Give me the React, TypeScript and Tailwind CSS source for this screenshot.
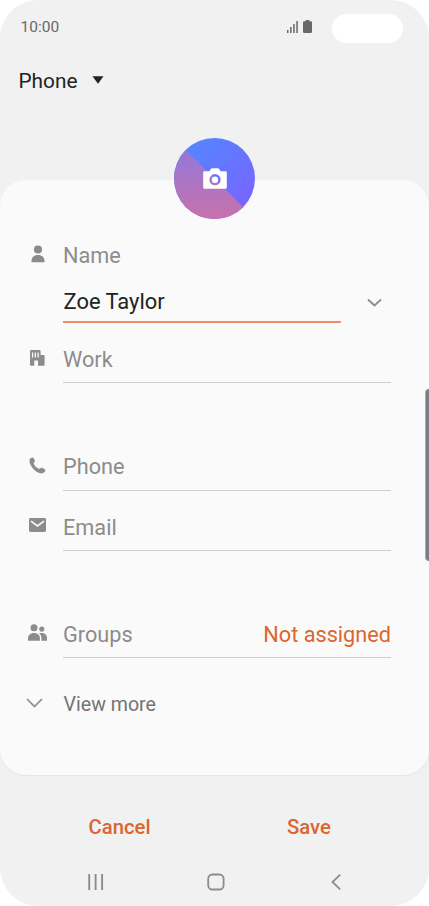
import type { ReactNode } from "react";

type FieldRowProps = {
  icon: ReactNode;
  label: string;
  value?: string;
  className?: string;
  labelClassName?: string;
};

const PersonIcon = () => (
  <svg width="14" height="18" viewBox="0 0 14 18" fill="currentColor">
    <circle cx="7" cy="4.500" r="4.100" />
    <path d="M.5 17.300v-1.600C.5 12.100 3.100 9.900 7 9.900s6.500 2.200 6.500 5.800v1.600z" />
  </svg>
);

const BuildingIcon = () => (
  <svg width="16" height="17" viewBox="0 0 16 17" fill="currentColor">
    <path
      fillRule="evenodd"
      d="M2.300.900h8A1.300 1.300 0 0 1 11.600 2.200V6.100h2.700A1.300 1.300 0 0 1 15.600 7.400v8a1.300 1.300 0 0 1-1.300 1.300H9v-5.200H5.200v5.200H2.300A1.300 1.300 0 0 1 1 15.400V2.200A1.300 1.300 0 0 1 2.300.900zM2.900 3.600v5h1.300v-5zm2.800 0v5h1.300v-5zm2.800 0v5h1.300v-5z"
    />
  </svg>
);

const PhoneIcon = () => (
  <svg width="17" height="17" viewBox="0 0 17 17" fill="currentColor">
    <path d="M.5 3.200C.6 1.700 2.500.2 3.700.5c.7.200 2.300 2.700 2.200 3.600 0 .9-1.400 1.500-1.200 2.300.5 2 3.200 4.700 5.400 5.400.9.200 1.500-1.100 2.400-1.100 1 0 4 1.700 4 2.500 0 1.200-2.100 3.200-3.900 3.200C7.300 16.400.2 9 .5 3.200z" />
  </svg>
);

const MailIcon = () => (
  <svg width="17" height="14" viewBox="0 0 17 14">
    <rect width="17" height="14" rx="1.400" fill="currentColor" />
    <path
      d="M2 3.100l6.500 4.900L15 3.100"
      fill="none"
      stroke="#fafafa"
      strokeWidth="1.600"
    />
  </svg>
);

const GroupsIcon = () => (
  <svg width="20" height="17" viewBox="0 0 20 17" fill="currentColor">
    <circle cx="7" cy="3.700" r="3.500" />
    <circle cx="14.800" cy="5.100" r="2.600" />
    <path d="M1 16.700v-2.500c0-3 2.500-5.100 6-5.100s5.900 2.100 5.900 5.100v2.500z" />
    <path d="M12.100 9.300c4.400-1 7.900 1 7.900 4.700v2.700h-5.600v-2.600c0-2-.8-3.600-2.300-4.800z" />
  </svg>
);

const CameraIcon = () => (
  <svg width="24" height="21" viewBox="0 0 24 21">
    <path
      fill="#fff"
      fillRule="evenodd"
      d="M1.300 3.200h5.200l1.300-2.100Q8.200.3 9.200.3h5.600q1 0 1.400.8l1.300 2.100h5.200q1.100 0 1.100 1.200v15.200q0 1.200-1.200 1.200H1.400q-1.200 0-1.200-1.200V4.400q0-1.200 1.100-1.200zM12 6.100a5.600 5.600 0 1 0 0 11.200 5.600 5.600 0 0 0 0-11.200zM12 8.500a3.200 3.200 0 1 1 0 6.400 3.200 3.200 0 0 1 0-6.400z"
    />
  </svg>
);

const Avatar = () => (
  <button
    aria-label="Add photo"
    className="-mt-[42px] mb-px grid size-[81px] place-items-center self-center overflow-hidden rounded-full"
  >
    <svg
      className="col-start-1 row-start-1"
      width="81"
      height="81"
      viewBox="0 0 82 82"
    >
      <defs>
        <linearGradient id="sky" x1=".2" y1="0" x2=".9" y2=".8">
          <stop offset="0" stopColor="#5286ff" />
          <stop offset="1" stopColor="#7766ff" />
        </linearGradient>
        <linearGradient id="dusk" x1="0" y1="0" x2="0" y2="1">
          <stop offset="0" stopColor="#887ae0" />
          <stop offset="1" stopColor="#c971ac" />
        </linearGradient>
      </defs>
      <rect width="82" height="82" fill="url(#sky)" />
      <path d="M0 0L82 82H0z" fill="url(#dusk)" />
    </svg>
    <span className="col-start-1 row-start-1 pb-px">
      <CameraIcon />
    </span>
  </button>
);

const FieldRow = ({
  icon,
  label,
  value,
  className = "",
  labelClassName = "",
}: FieldRowProps) => (
  <div className={`flex h-12 text-[21.7px] text-[#8c8c8c] ${className}`}>
    <div className="flex w-[62px] items-center justify-center pb-1 pl-3">
      {icon}
    </div>
    <div className="ml-px mr-[38px] flex flex-1 items-center justify-between border-b border-[#cfcfcf] pt-[3px]">
      <span className={labelClassName}>{label}</span>
      {value && <span className="text-[#dc6530]">{value}</span>}
    </div>
  </div>
);

const StatusBar = () => (
  <div className="flex h-14 items-center pl-[20.5px] pr-[26px] text-[#686868]">
    <span className="flex-1 text-[15.5px] leading-none">10:00</span>
    <svg
      className="mb-1"
      width="11"
      height="13"
      viewBox="0 0 11 13"
      fill="currentColor"
    >
      <path d="M0 10h1.500v3H0zM3.100 7h1.500v6H3.100zM6.200 4h1.500v9H6.200zM9.300 1h1.500v12H9.300z" />
    </svg>
    <svg
      className="mb-1 ml-[5px]"
      width="9"
      height="13"
      viewBox="0 0 9 13"
      fill="currentColor"
    >
      <path d="M2.700 0h3.600v1.200h1.500Q9 1.200 9 2.400v9.400Q9 13 7.800 13H1.200Q0 13 0 11.800V2.400Q0 1.200 1.200 1.200h1.500z" />
    </svg>
    <div className="ml-5 h-[29px] w-[71px] rounded-full bg-white" />
  </div>
);

const NavBar = () => (
  <div className="flex h-12 items-center text-[#8c8c8c]">
    <svg
      className="ml-[88px]"
      width="16"
      height="16"
      viewBox="0 0 16 16"
      fill="none"
      stroke="currentColor"
      strokeWidth="1.900"
    >
      <path d="M1.200 0v16M7.600 0v16M14.100 0v16" />
    </svg>
    <svg
      className="ml-[103px]"
      width="18"
      height="18"
      viewBox="0 0 18 18"
      fill="none"
      stroke="currentColor"
      strokeWidth="1.800"
    >
      <rect x="1.200" y="1.500" width="15.400" height="15" rx="4.300" />
    </svg>
    <svg
      className="ml-[106px]"
      width="10"
      height="16"
      viewBox="0 0 10 16"
      fill="none"
      stroke="currentColor"
      strokeWidth="1.800"
    >
      <path d="M9.200.7L1.500 8l7.700 7.300" />
    </svg>
  </div>
);

const App = () => {
  return (
    <div className="relative flex h-[906px] w-[429px] flex-col overflow-hidden rounded-[38px] bg-[#f1f1f1] font-['Roboto',sans-serif]">
      <StatusBar />

      <div className="flex h-[50px] items-center pl-[18.5px] pt-0.5 text-[20.8px] text-[#222]">
        <span>Phone</span>
        <svg
          className="mb-1 ml-[14.5px]"
          width="12"
          height="8"
          viewBox="0 0 12 8"
        >
          <path d="M.5.300h11L6 7.700z" fill="#222" />
        </svg>
      </div>

      <main className="mt-[74px] flex h-[595px] flex-col rounded-[26px] bg-[#fafafa] shadow-[0_1px_1px_#e4e4e4]">
        <Avatar />

        <div className="mt-[11px] flex h-12 items-center text-[21.7px] text-[#8c8c8c]">
          <div className="flex w-[63px] justify-center pb-0.5 pl-3">
            <PersonIcon />
          </div>
          <span className="pt-0.5">Name</span>
        </div>

        <div className="ml-[63px] flex h-11 items-center">
          <div className="flex h-11 w-[278px] items-center border-b-2 border-[#ec8f66] pl-[0.5px] pt-[5px] text-[21.9px] text-[#222]">
            Zoe Taylor
          </div>
          <svg
            className="ml-[26px] mt-[3px]"
            width="15"
            height="9"
            viewBox="0 0 15 9"
            fill="none"
            stroke="#8c8c8c"
            strokeWidth="1.800"
          >
            <path d="M1 1.500L7.500 7.500L14 1.500" />
          </svg>
        </div>

        <FieldRow className="mt-3" icon={<BuildingIcon />} label="Work" />
        <FieldRow
          className="mt-[60px]"
          labelClassName="pb-0.5"
          icon={<PhoneIcon />}
          label="Phone"
        />
        <FieldRow className="mt-3" icon={<MailIcon />} label="Email" />
        <FieldRow
          className="mt-[59px]"
          icon={<GroupsIcon />}
          label="Groups"
          value="Not assigned"
        />

        <div className="mt-[22px] flex h-12 items-center pl-[26px] text-[19.6px] text-[#737373]">
          <svg
            className="mb-0.5"
            width="17"
            height="10"
            viewBox="0 0 17 10"
            fill="none"
            stroke="#8c8c8c"
            strokeWidth="1.700"
          >
            <path d="M1 1L8.500 8.500L16 1" />
          </svg>
          <span className="ml-[20.5px] pt-0.5">View more</span>
        </div>
      </main>

      <div className="mt-7 flex h-12 items-center text-[20.3px] font-medium text-[#dc6530]">
        <button className="ml-[88.5px] w-[198.5px] text-left">Cancel</button>
        <button>Save</button>
      </div>

      <div className="mt-[7px]">
        <NavBar />
      </div>

      {/* edge panel handle */}
      <div className="absolute top-[389px] -right-1 h-[172px] w-2 rounded-lg border-l border-[#aaa9b1] bg-[#7c7a88]" />
    </div>
  );
};

export default App;
